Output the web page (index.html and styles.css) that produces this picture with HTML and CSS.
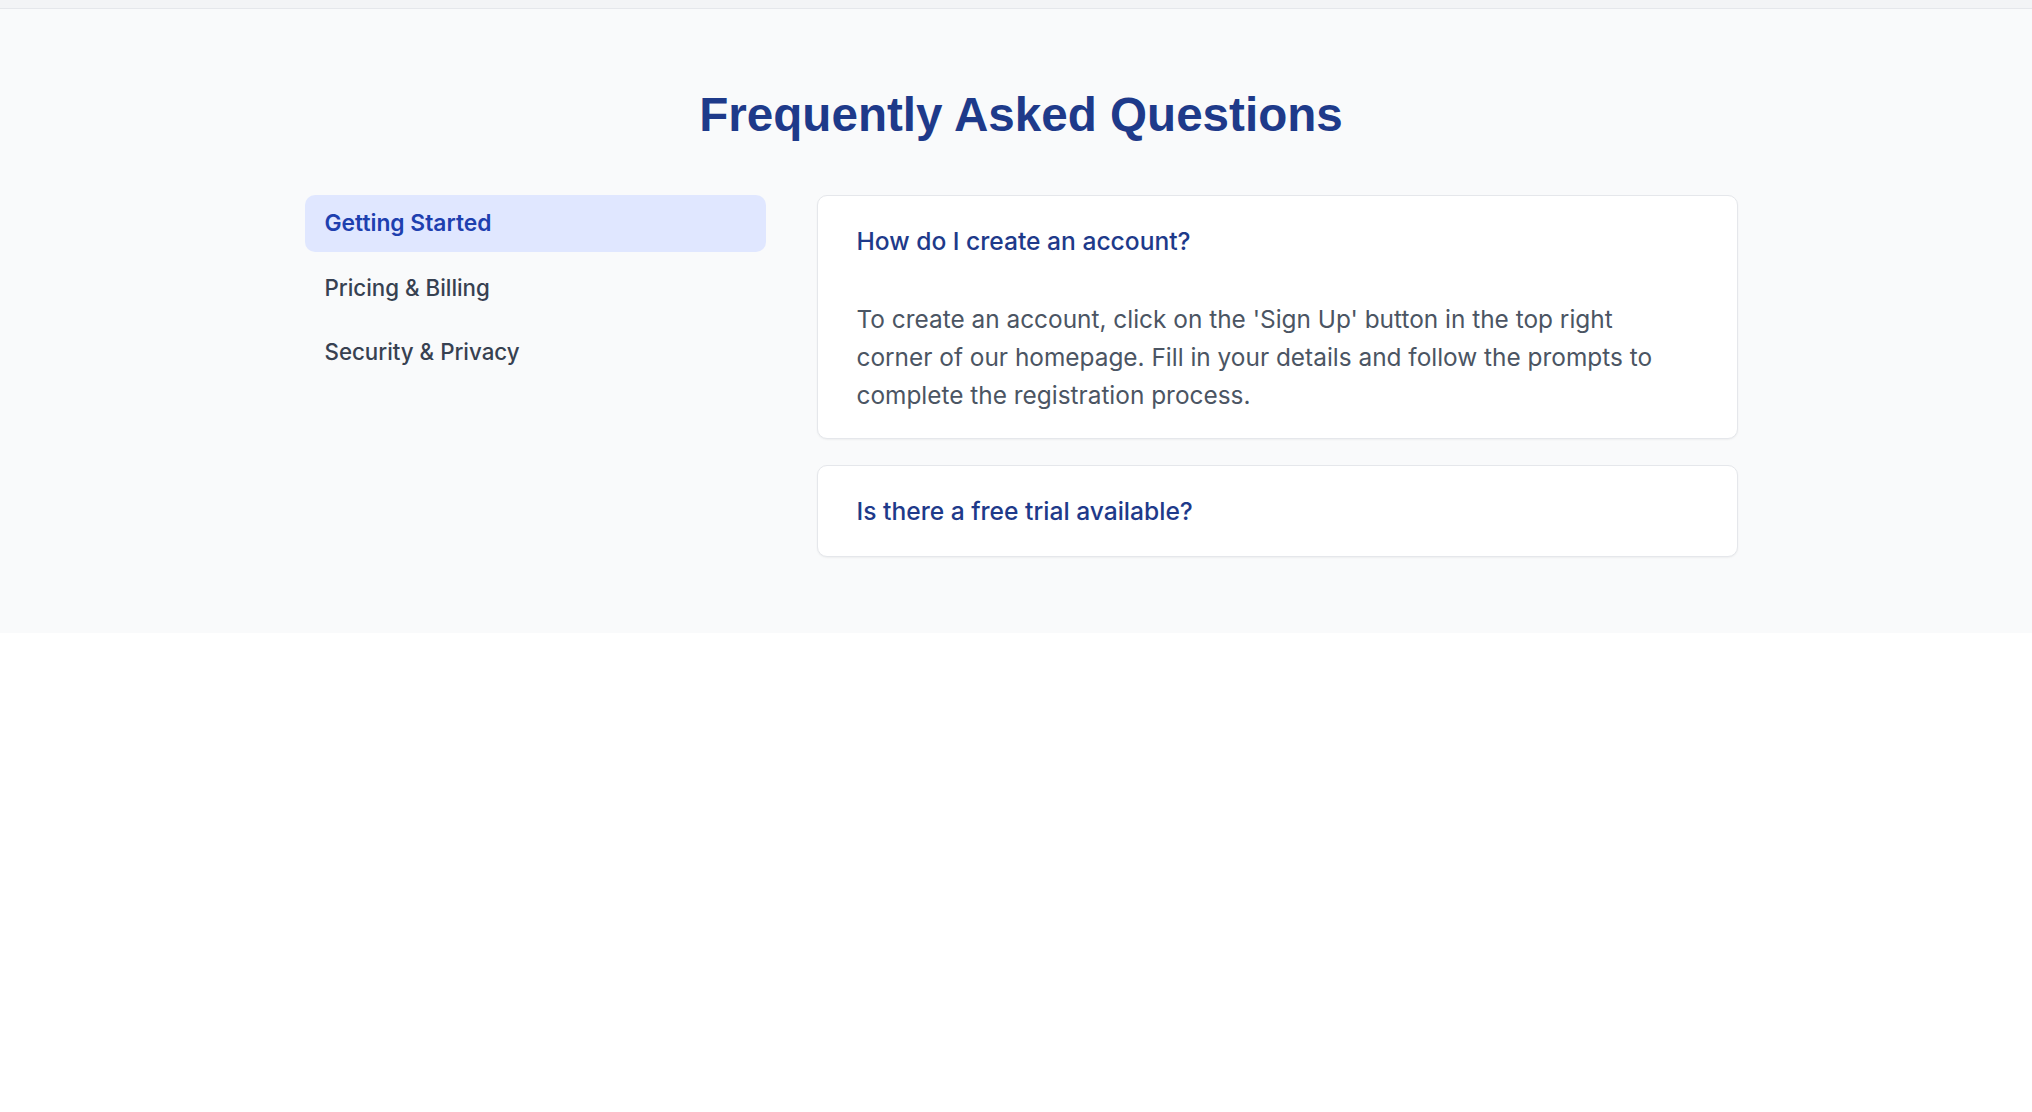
FILE: index.html
```html
<!DOCTYPE html>
<html lang="en">
<head>
<meta charset="utf-8">
<title>FAQ</title>
<link rel="stylesheet" href="styles.css">
</head>
<body>
<div class="topbar"></div>
<section class="faq">
  <div class="faq-inner">
    <h1 class="faq-title">Frequently Asked Questions</h1>
    <div class="faq-grid">
      <nav class="faq-nav">
        <button class="nav-item active">Getting Started</button>
        <button class="nav-item">Pricing &amp; Billing</button>
        <button class="nav-item">Security &amp; Privacy</button>
      </nav>
      <div class="faq-list">
        <div class="faq-card">
          <button class="faq-q">How do I create an account?</button>
          <div class="faq-a">To create an account, click on the 'Sign Up' button in the top right corner of our homepage. Fill in your details and follow the prompts to complete the registration process.</div>
        </div>
        <div class="faq-card">
          <button class="faq-q">Is there a free trial available?</button>
        </div>
      </div>
    </div>
  </div>
</section>
</body>
</html>
```

FILE: styles.css
```css
* { box-sizing: border-box; }
html, body { margin: 0; padding: 0; background: #ffffff; }
body { font-family: Inter, "Noto Sans", "Liberation Sans", sans-serif; }

.topbar {
  height: 9px;
  background: #f3f4f6;
  border-bottom: 1px solid #e5e7eb;
}

.faq {
  background: #f9fafb;
  padding: 80px 0 76px;
}

.faq-inner {
  width: 1433px;
  margin: 0 auto;
  position: relative;
  left: 5px;
}

.faq-title {
  margin: 0 0 54px;
  text-align: center;
  font-family: "Liberation Sans", Arial, sans-serif;
  font-weight: 700;
  font-size: 47.6px;
  line-height: 52px;
  color: #1e3a8a;
}

.faq-grid {
  display: flex;
  gap: 51px;
  align-items: flex-start;
}

.faq-nav {
  width: 461px;
  flex: none;
  display: flex;
  flex-direction: column;
  gap: 7px;
}

.nav-item {
  display: block;
  width: 100%;
  text-align: left;
  border: 0;
  background: transparent;
  font-family: inherit;
  font-size: 22.3px;
  line-height: 36.4px;
  padding: 10.4px 20px;
  border-radius: 10px;
  font-weight: 500;
  color: #374151;
  cursor: pointer;
}

.nav-item.active {
  background: #e0e7ff;
  color: #1e40af;
  font-weight: 600;
  font-size: 22.8px;
}

.faq-list {
  flex: 1;
  display: flex;
  flex-direction: column;
  gap: 26px;
}

.faq-card {
  background: #ffffff;
  border: 1px solid #e5e7eb;
  border-radius: 10px;
  box-shadow: 0 1px 2px rgba(0, 0, 0, 0.05);
}

.faq-q {
  display: block;
  width: 100%;
  text-align: left;
  border: 0;
  background: transparent;
  font-family: inherit;
  font-size: 24.6px;
  line-height: 36.4px;
  font-weight: 500;
  color: #1e3a8a;
  padding: 27px 39px;
  cursor: pointer;
}

.faq-a {
  padding: 13.5px 60px 24px 39px;
  font-size: 24.4px;
  line-height: 38px;
  color: #4b5563;
}
```
